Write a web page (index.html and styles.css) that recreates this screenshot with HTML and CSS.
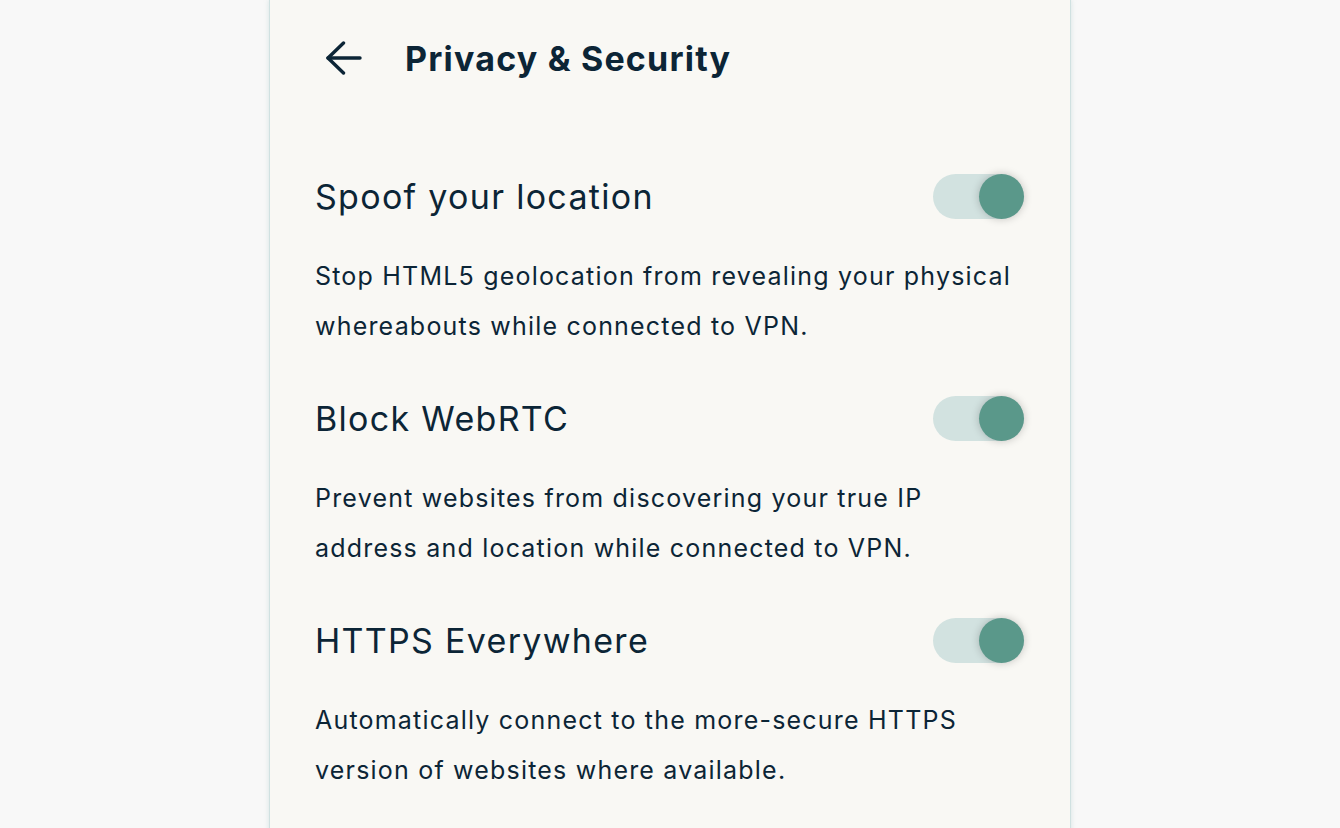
FILE: index.html
```html
<!DOCTYPE html>
<html lang="en">
<head>
  <meta charset="UTF-8" />
  <meta name="viewport" content="width=device-width, initial-scale=1.0"/>
  <title>Privacy &amp; Security</title>
  <link rel="stylesheet" href="styles.css">
</head>
<body>
  <div class="panel">
    <header class="panel-header">
      <button class="back-btn" aria-label="Back">
        <svg width="36" height="36" viewBox="0 0 36 36" fill="none" stroke="currentColor" stroke-width="3.4" stroke-linecap="round" stroke-linejoin="round">
          <path d="M34 18H2"/>
          <path d="M17.5 3L2 18l15.5 15"/>
        </svg>
      </button>
      <h1>Privacy &amp; Security</h1>
    </header>

    <div class="settings">
      <div class="setting">
        <div class="setting-row">
          <span class="setting-label">Spoof your location</span>
          <span class="toggle on"><span class="knob"></span></span>
        </div>
        <p class="setting-desc">Stop HTML5 geolocation from revealing your physical whereabouts while connected to VPN.</p>
      </div>

      <div class="setting">
        <div class="setting-row">
          <span class="setting-label">Block WebRTC</span>
          <span class="toggle on"><span class="knob"></span></span>
        </div>
        <p class="setting-desc">Prevent websites from discovering your true IP address and location while connected to VPN.</p>
      </div>

      <div class="setting">
        <div class="setting-row">
          <span class="setting-label">HTTPS Everywhere</span>
          <span class="toggle on"><span class="knob"></span></span>
        </div>
        <p class="setting-desc">Automatically connect to the more-secure HTTPS version of websites where available.</p>
      </div>
    </div>
  </div>
</body>
</html>
```

FILE: styles.css
```css
body {
  margin: 0;
  font-family: 'Inter', 'Noto Sans', sans-serif;
  background: #f8f8f8;
  color: #0c2536;
  height: 100vh;
  overflow: hidden;
}

.panel {
  width: 800px;
  margin: 0 auto;
  min-height: 1000px;
  background: #f9f8f4;
  border-left: 1px solid #d0e1e1;
  border-right: 1px solid #d0e1e1;
  box-shadow: 0 0 5px rgba(150, 190, 190, 0.35);
}

.panel-header {
  display: flex;
  align-items: center;
  height: 116px;
  padding: 0 46px;
}

.back-btn {
  display: flex;
  padding: 0;
  margin-left: 10px;
  border: none;
  background: none;
  color: #0c2536;
  cursor: pointer;
}

h1 {
  margin: 0 0 0 43px;
  font-size: 34px;
  font-weight: 700;
  letter-spacing: 1.2px;
}

.settings {
  padding: 58px 46px 0 45px;
}

.setting {
  margin-bottom: 45px;
}

.setting-row {
  display: flex;
  align-items: center;
  justify-content: space-between;
  height: 45px;
}

.setting-label {
  font-size: 34px;
  font-weight: 400;
  letter-spacing: 1.3px;
}

.setting-desc {
  max-width: 700px;
  margin: 32px 0 0;
  font-size: 25px;
  line-height: 50px;
  letter-spacing: 1.2px;
}

.toggle {
  position: relative;
  width: 91px;
  height: 45px;
  border-radius: 23px;
  background: #d2e2e0;
}

.toggle .knob {
  position: absolute;
  top: 0;
  right: 0;
  width: 45px;
  height: 45px;
  border-radius: 50%;
  background: #5a988a;
  box-shadow: 0 0 8px rgba(0, 0, 0, 0.22);
}
```
